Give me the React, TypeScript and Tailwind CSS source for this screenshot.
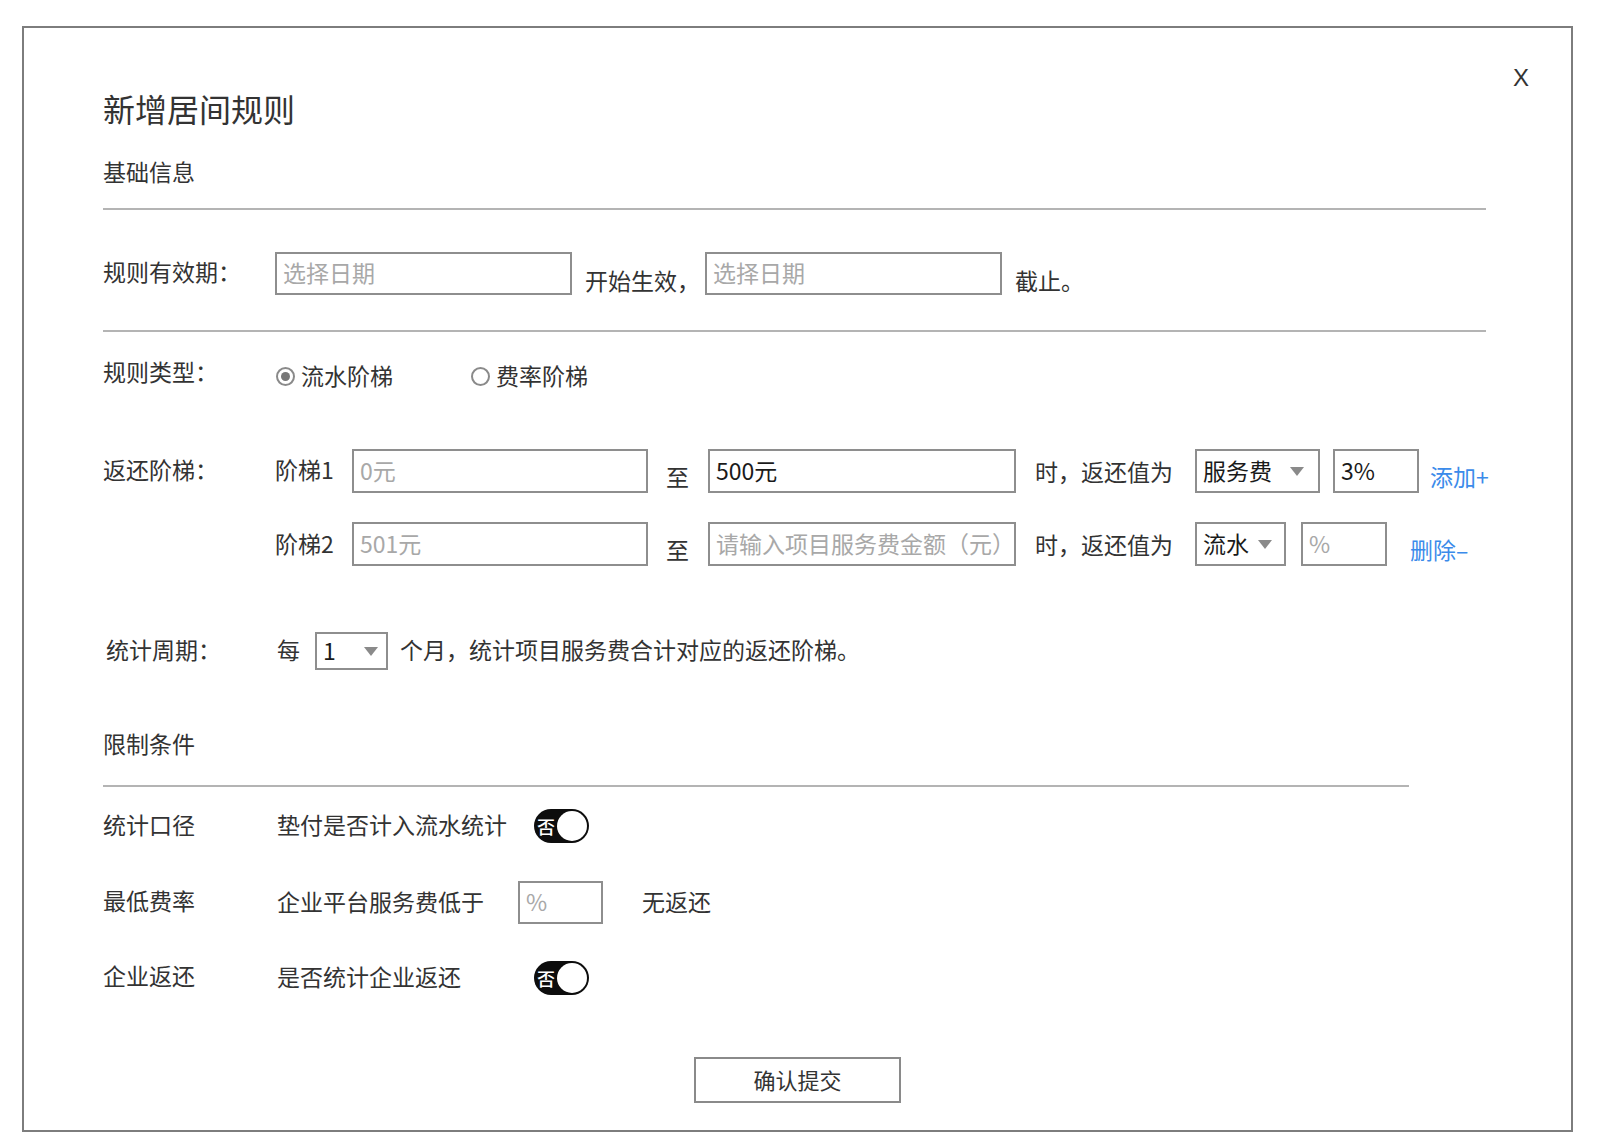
import React from "react";

const F = { fontFamily: '"Noto Sans CJK SC", "Noto Sans", sans-serif' };

function Input({ w, h = 43, value, placeholder }: { w: number; h?: number; value?: string; placeholder?: string }) {
  return (
    <div
      className="shrink-0 border-2 border-[#8e8e8e] bg-white flex items-center pl-[6px] pb-[2px] text-[23px] leading-none"
      style={{ width: w, height: h }}
    >
      {value ? <span className="text-[#1a1a1a]">{value}</span> : <span className="text-[#a8a8a8]">{placeholder}</span>}
    </div>
  );
}

function Select({ w, h = 44, value, arrowRight = 14 }: { w: number; h?: number; value: string; arrowRight?: number }) {
  return (
    <div
      className="shrink-0 border-2 border-[#8e8e8e] bg-white flex items-center justify-between pl-[6px] text-[23px] leading-none text-[#1a1a1a]"
      style={{ width: w, height: h, paddingRight: arrowRight }}
    >
      <span className="pb-[2px]">{value}</span>
      <svg width="14" height="9" viewBox="0 0 14 9">
        <polygon points="0,0 14,0 7,9" fill="#8a8a8a" />
      </svg>
    </div>
  );
}

function Toggle() {
  return (
    <div className="shrink-0 w-[55px] h-[34px] rounded-full bg-[#0d0d0d] flex items-center pl-[3px] pr-[2px] justify-between">
      <span className="text-white text-[18px] leading-none font-medium">否</span>
      <span className="w-[30px] h-[30px] rounded-full bg-white" />
    </div>
  );
}

function Radio({ checked }: { checked?: boolean }) {
  return (
    <span className="shrink-0 w-[19px] h-[19px] rounded-full border-2 border-[#8a8a8a] flex items-center justify-center bg-white">
      {checked && <span className="w-[9px] h-[9px] rounded-full bg-[#777]" />}
    </span>
  );
}

export default function App() {
  return (
    <div className="w-[1598px] h-[1142px] bg-white text-[#333] overflow-hidden" style={F}>
      <div className="ml-[22px] mt-[26px] w-[1551px] h-[1106px] border-2 border-[#7d7d7d] relative flex flex-col">
        <div
          className="absolute top-[38px] right-[42px] text-[24px] leading-none text-[#333]"
          style={{ fontFamily: '"Liberation Sans", sans-serif' }}
        >
          X
        </div>

        <div className="pl-[79px] flex flex-col">
          <div className="mt-[60px] text-[32px] leading-[40px] text-[#333]">新增居间规则</div>
          <div className="mt-[28px] text-[23px] leading-[30px]">基础信息</div>
          <div className="mt-[22px] w-[1383px] h-[2px] bg-[#b4b4b4]" />

          {/* 规则有效期 */}
          <div className="mt-[42px] flex items-center h-[43px] text-[23px]">
            <span className="w-[172px] leading-[30px] pb-[6px]">规则有效期：</span>
            <Input w={297} placeholder="选择日期" />
            <span className="self-end leading-[30px] ml-[13px] w-[120px]">开始生效，</span>
            <Input w={297} placeholder="选择日期" />
            <span className="self-end leading-[30px] ml-[13px]">截止。</span>
          </div>
          <div className="mt-[35px] w-[1383px] h-[2px] bg-[#b4b4b4]" />

          {/* 规则类型 */}
          <div className="mt-[29px] flex items-center h-[30px] text-[23px]">
            <span className="w-[173px] leading-[30px] pb-[10px]">规则类型：</span>
            <div className="w-[195px] flex items-center gap-[6px]">
              <Radio checked />
              <span className="leading-[30px] pb-[2px]">流水阶梯</span>
            </div>
            <div className="flex items-center gap-[6px]">
              <Radio />
              <span className="leading-[30px] pb-[2px]">费率阶梯</span>
            </div>
          </div>

          {/* 返还阶梯 */}
          <div className="mt-[58px] flex items-center h-[44px] text-[23px]">
            <span className="w-[172px] leading-[30px] pb-[4px]">返还阶梯：</span>
            <span className="w-[77px] leading-[30px] pb-[4px]">阶梯1</span>
            <Input w={296} h={44} placeholder="0元" />
            <span className="ml-[18px] mt-[10px] leading-[30px]">至</span>
            <div className="ml-[19px]">
              <Input w={308} h={44} value="500元" />
            </div>
            <span className="ml-[19px] w-[160px] leading-[30px]">时，返还值为</span>
            <Select w={125} value="服务费" arrowRight={14} />
            <div className="ml-[13px]">
              <Input w={86} h={44} value="3%" />
            </div>
            <span className="ml-[11px] mt-[10px] text-[#3b8bea] leading-[30px]">添加+</span>
          </div>

          <div className="mt-[29px] flex items-center h-[44px] text-[23px]">
            <span className="w-[172px]" />
            <span className="w-[77px] leading-[30px] pb-[2px]">阶梯2</span>
            <Input w={296} h={44} placeholder="501元" />
            <span className="ml-[18px] mt-[10px] leading-[30px]">至</span>
            <div className="ml-[19px]">
              <Input w={308} h={44} placeholder="请输入项目服务费金额（元）" />
            </div>
            <span className="ml-[19px] w-[160px] leading-[30px]">时，返还值为</span>
            <Select w={91} value="流水" arrowRight={12} />
            <div className="ml-[15px]">
              <Input w={86} h={44} placeholder="%" />
            </div>
            <span className="ml-[23px] mt-[10px] text-[#3b8bea] leading-[30px]">删除–</span>
          </div>

          {/* 统计周期 */}
          <div className="mt-[66px] flex items-center h-[38px] text-[23px]">
            <span className="w-[174px] pl-[3px] leading-[30px] pb-[4px]">统计周期：</span>
            <span className="w-[38px] leading-[30px] pb-[4px]">每</span>
            <Select w={73} h={38} value="1" arrowRight={8} />
            <span className="ml-[12px] leading-[30px] pb-[4px]">个月，统计项目服务费合计对应的返还阶梯。</span>
          </div>

          <div className="mt-[58px] text-[23px] leading-[30px]">限制条件</div>
          <div className="mt-[27px] w-[1306px] h-[2px] bg-[#b4b4b4]" />

          {/* 统计口径 */}
          <div className="mt-[22px] flex items-center h-[34px] text-[23px]">
            <span className="w-[174px] leading-[30px] pb-[4px]">统计口径</span>
            <span className="w-[257px] leading-[30px] pb-[4px]">垫付是否计入流水统计</span>
            <Toggle />
          </div>

          <div className="mt-[38px] flex items-center h-[43px] text-[23px]">
            <span className="w-[174px] leading-[30px] pb-[6px]">最低费率</span>
            <span className="w-[241px] leading-[30px] pb-[4px]">企业平台服务费低于</span>
            <Input w={85} placeholder="%" />
            <span className="ml-[39px] leading-[30px] pb-[4px]">无返还</span>
          </div>

          <div className="mt-[37px] flex items-center h-[34px] text-[23px]">
            <span className="w-[174px] leading-[30px] pb-[6px]">企业返还</span>
            <span className="w-[257px] leading-[30px] pb-[4px]">是否统计企业返还</span>
            <Toggle />
          </div>
        </div>

        <div className="mt-[62px] flex justify-center">
          <div className="w-[207px] h-[46px] border-2 border-[#8a8a8a] flex items-center justify-center text-[22px] leading-none text-[#333] pb-[2px]">
            确认提交
          </div>
        </div>
      </div>
    </div>
  );
}
